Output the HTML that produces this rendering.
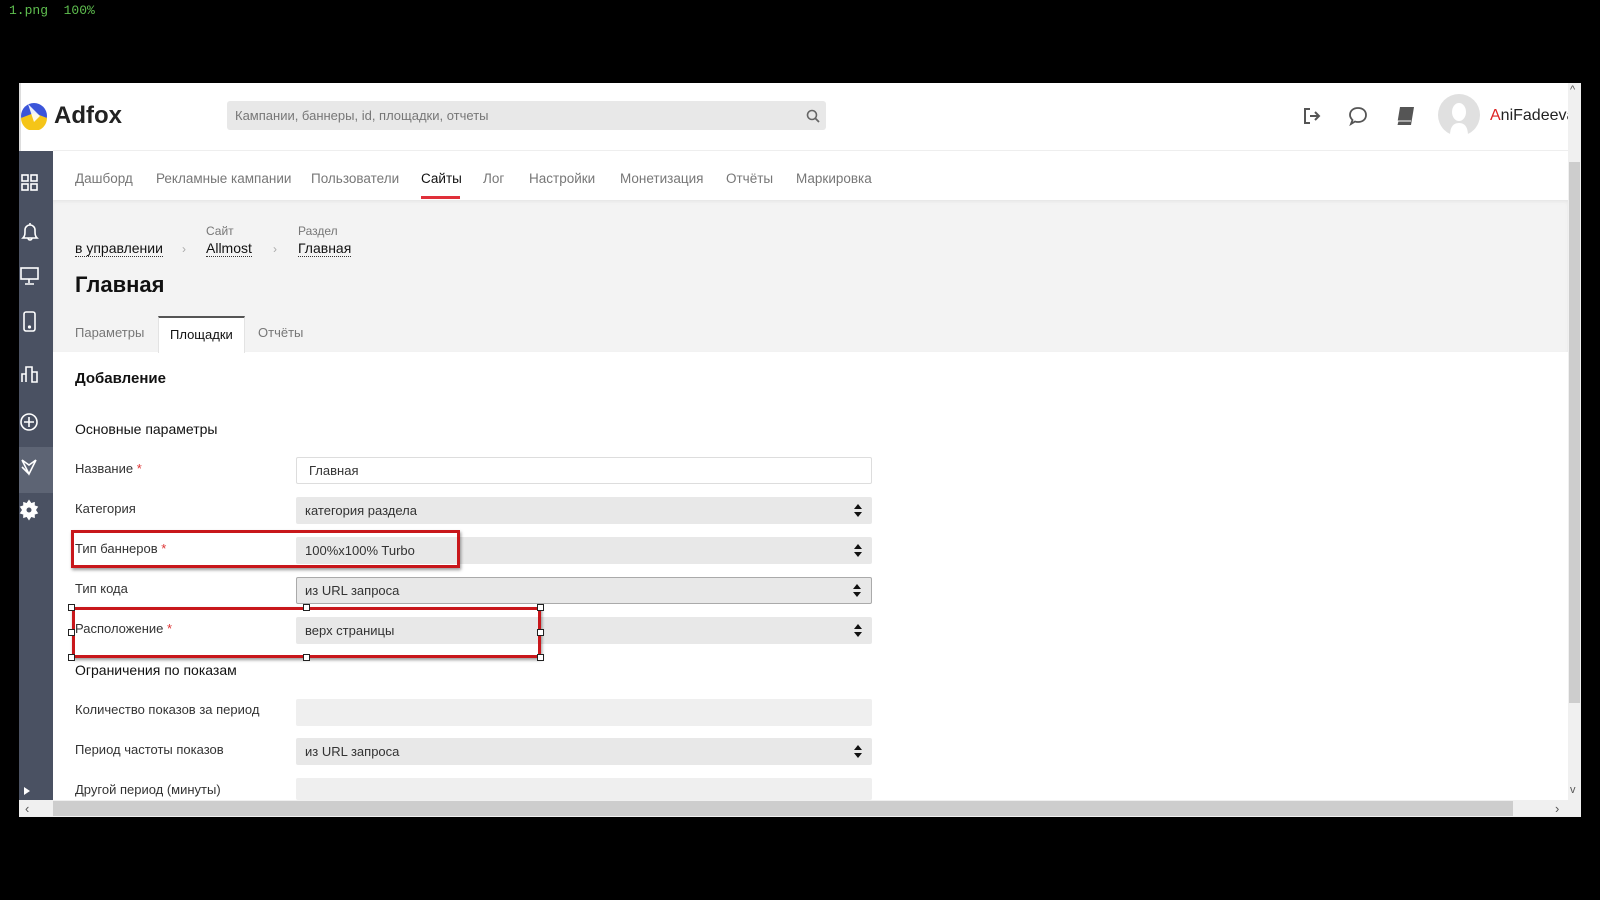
<!DOCTYPE html>
<html><head><meta charset="utf-8"><style>
*{margin:0;padding:0;box-sizing:border-box}
body{width:1600px;height:900px;background:#000;position:relative;overflow:hidden;font-family:"Liberation Sans",Arial,sans-serif;color:#222}
.a{position:absolute}
.app{left:19px;top:83px;width:1562px;height:734px;background:#fff;overflow:hidden}
.t{position:absolute;white-space:nowrap}
.nav{font-size:13.5px;color:#777;top:171px}
.lbl{font-size:13px;color:#333;left:75px}
.fld{left:296px;width:576px;height:27px;background:#e8e8e8;border-radius:2px;font-size:13px;color:#333;padding-left:9px;line-height:27px}
.arr{position:absolute;right:10px;top:7px;width:8px;height:13px}
.star{color:#d33}
.red{border:3px solid #c8171b;box-shadow:1px 2px 3px rgba(0,0,0,.4)}
.h{width:7px;height:7px;background:#fff;border:1px solid #222;position:absolute}
</style></head><body>
<div class="t" style="left:9px;top:3px;color:#5fbf4f;font-family:'Liberation Mono',monospace;font-size:13px">1.png&nbsp;&nbsp;100%</div>
<div class="a app"></div>
<div class="a" style="left:19px;top:83px;width:2px;height:734px;background:#ddd"></div>
<svg class="a" style="left:20px;top:102px" width="28" height="28" viewBox="0 0 28 28"><circle cx="14" cy="14" r="13" fill="#3b55d9"/><path d="M1 16 L14 11 L27 16 A13 13 0 0 1 1 16Z" fill="#f5c518"/><path d="M8 2 L20 14 L14 20 Z" fill="#fff" opacity=".9"/></svg>
<div class="t" style="left:54px;top:102px;font-size:24px;font-weight:bold;color:#222">Adfox</div>
<div class="a" style="left:227px;top:101px;width:599px;height:29px;background:#e8e8e8;border-radius:3px"></div>
<div class="t" style="left:235px;top:108px;font-size:13px;color:#777">Кампании, баннеры, id, площадки, отчеты</div>
<svg class="a" style="left:806px;top:109px" width="14" height="14"><circle cx="6" cy="6" r="4.5" fill="none" stroke="#666" stroke-width="1.6"/><path d="M9.5 9.5 L13 13" stroke="#666" stroke-width="1.8"/></svg>
<svg class="a" style="left:1302px;top:106px" width="20" height="20"><path d="M8 3H3v14h5" fill="none" stroke="#555" stroke-width="2"/><path d="M8 10h9M13 6l4 4-4 4" fill="none" stroke="#555" stroke-width="2"/></svg>
<svg class="a" style="left:1347px;top:105px" width="22" height="22"><path d="M11 3c5 0 8 3 8 7s-3 7-8 7c-1 0-2 0-3-.5L4 19l1.5-4C4 13.5 3 12 3 10c0-4 3-7 8-7z" fill="none" stroke="#555" stroke-width="1.8"/></svg>
<svg class="a" style="left:1394px;top:105px" width="22" height="22"><path d="M6 2h14l-3 18H3z" fill="#555"/><path d="M3 20l1-4h13" stroke="#fff" stroke-width="1" fill="none"/></svg>
<div class="a" style="left:1438px;top:94px;width:42px;height:42px;border-radius:50%;background:#e0e0e0"></div>
<svg class="a" style="left:1446px;top:99px" width="26" height="37"><ellipse cx="13" cy="13" rx="7" ry="9" fill="#fff"/><path d="M4 37c0-10 4-13 9-13s9 3 9 13z" fill="#fff"/></svg>
<div class="t" style="left:1490px;top:107px;font-size:16px;color:#222"><span style="color:#d22">A</span>niFadeeva</div>
<div class="a" style="left:53px;top:150px;width:1515px;height:1px;background:#eee"></div>
<div class="a" style="left:19px;top:151px;width:34px;height:649px;background:#4a5162"></div>
<div class="a" style="left:19px;top:447px;width:34px;height:46px;background:#5d6474"></div>
<svg class="a" style="left:19px;top:170px" width="34" height="360" fill="none" stroke="#fff" stroke-width="1.6">
<rect x="3" y="5" width="6" height="6"/><rect x="12" y="5" width="6" height="6"/><rect x="3" y="14" width="6" height="6"/><rect x="12" y="14" width="6" height="6"/>
<path d="M4 68c2-2 2-4 2-8a5 5 0 0 1 10 0c0 4 0 6 2 8zM9 68a2 2 0 0 0 4 0M11 55v-2"/>
<rect x="2" y="98" width="17" height="11"/><path d="M10 109v4M6 114h9"/>
<rect x="5" y="142" width="11" height="19" rx="2"/><circle cx="10.5" cy="157" r=".8" fill="#fff"/>
<path d="M3 212v-8h4v8M7 212v-15h6v15M13 212v-10h5v10z"/>
<circle cx="10" cy="252" r="8"/><path d="M10 247v10M5 252h10"/>
<path d="M3 290l7 5 7-5M3 290l7 14 7-14M3 297l7 7"/>
<path d="M10 331l2 3 3-1 0 3 3 1-2 3 2 3-3 1 0 3-3-1-2 3-2-3-3 1 0-3-3-1 2-3-2-3 3-1 0-3 3 1z" fill="#fff"/><circle cx="10" cy="340" r="2.5" fill="#4a5162" stroke="none"/>
</svg>
<div class="a" style="left:24px;top:787px;width:0;height:0;border-left:6px solid #fff;border-top:4px solid transparent;border-bottom:4px solid transparent"></div>
<div class="t nav" style="left:75px">Дашборд</div>
<div class="t nav" style="left:156px">Рекламные кампании</div>
<div class="t nav" style="left:311px">Пользователи</div>
<div class="t nav" style="left:421px;color:#111">Сайты</div>
<div class="t nav" style="left:483px">Лог</div>
<div class="t nav" style="left:529px">Настройки</div>
<div class="t nav" style="left:620px">Монетизация</div>
<div class="t nav" style="left:726px">Отчёты</div>
<div class="t nav" style="left:796px">Маркировка</div>
<div class="a" style="left:421px;top:196px;width:39px;height:3px;background:#e0303a"></div>
<div class="a" style="left:53px;top:200px;width:1515px;height:152px;background:#f3f3f3;box-shadow:inset 0 2px 3px rgba(0,0,0,.05)"></div>
<div class="t" style="left:206px;top:224px;font-size:12px;color:#777">Сайт</div>
<div class="t" style="left:298px;top:224px;font-size:12px;color:#777">Раздел</div>
<div class="t" style="left:75px;top:240px;font-size:14px;color:#111;border-bottom:1px dotted #333">в управлении</div>
<div class="t" style="left:182px;top:242px;font-size:12px;color:#aaa">›</div>
<div class="t" style="left:206px;top:240px;font-size:14px;color:#111;border-bottom:1px dotted #333">Allmost</div>
<div class="t" style="left:273px;top:242px;font-size:12px;color:#aaa">›</div>
<div class="t" style="left:298px;top:240px;font-size:14px;color:#111;border-bottom:1px dotted #333">Главная</div>
<div class="t" style="left:75px;top:272px;font-size:22px;font-weight:bold;color:#111">Главная</div>
<div class="t" style="left:75px;top:325px;font-size:13px;color:#777">Параметры</div>
<div class="a" style="left:158px;top:316px;width:87px;height:37px;background:#fff;border-top:2px solid #555;border-left:1px solid #e3e3e3;border-right:1px solid #e3e3e3"></div>
<div class="t" style="left:170px;top:327px;font-size:13px;color:#111">Площадки</div>
<div class="t" style="left:258px;top:325px;font-size:13px;color:#777">Отчёты</div>
<div class="t" style="left:75px;top:370px;font-size:15px;font-weight:bold;color:#111">Добавление</div>
<div class="t" style="left:75px;top:421px;font-size:14px;color:#111">Основные параметры</div>
<div class="t lbl" style="top:461px">Название <span class="star">*</span></div>
<div class="t lbl" style="top:501px">Категория</div>
<div class="t lbl" style="top:541px">Тип баннеров <span class="star">*</span></div>
<div class="t lbl" style="top:581px">Тип кода</div>
<div class="t lbl" style="top:621px">Расположение <span class="star">*</span></div>
<div class="t" style="left:75px;top:662px;font-size:14px;color:#111">Ограничения по показам</div>
<div class="t lbl" style="top:702px">Количество показов за период</div>
<div class="t lbl" style="top:742px">Период частоты показов</div>
<div class="t lbl" style="top:782px">Другой период (минуты)</div>
<div class="a fld" style="top:457px;background:#fff;border:1px solid #ddd;padding-left:12px;line-height:25px">Главная</div>
<svg width="0" height="0" style="position:absolute"><defs><g id="ar"><path d="M4 0L8 5H0z M0 8H8L4 13z" fill="#111"/></g></defs></svg>
<div class="a fld" style="top:497px">категория раздела<svg class="arr"><use href="#ar"/></svg></div>
<div class="a fld" style="top:537px">100%x100% Turbo<svg class="arr"><use href="#ar"/></svg></div>
<div class="a fld" style="top:577px;border:1px solid #aaa;line-height:25px;padding-left:8px">из URL запроса<svg class="arr" style="top:6px"><use href="#ar"/></svg></div>
<div class="a fld" style="top:617px">верх страницы<svg class="arr"><use href="#ar"/></svg></div>
<div class="a fld" style="top:699px;background:#efefef"></div>
<div class="a fld" style="top:738px">из URL запроса<svg class="arr"><use href="#ar"/></svg></div>
<div class="a fld" style="top:778px;background:#efefef;height:22px"></div>
<div class="a red" style="left:71px;top:530px;width:389px;height:38px"></div>
<div class="a red" style="left:72px;top:607px;width:469px;height:51px"></div>
<div class="h" style="left:68px;top:604px"></div><div class="h" style="left:303px;top:604px"></div><div class="h" style="left:537px;top:604px"></div>
<div class="h" style="left:68px;top:629px"></div><div class="h" style="left:537px;top:629px"></div>
<div class="h" style="left:68px;top:654px"></div><div class="h" style="left:303px;top:654px"></div><div class="h" style="left:537px;top:654px"></div>
<div class="a" style="left:1568px;top:83px;width:13px;height:717px;background:#f0f0f0"></div>
<div class="a" style="left:1569px;top:162px;width:11px;height:541px;background:#cdcdcd"></div>
<div class="t" style="left:1570px;top:84px;font-size:11px;color:#555">^</div>
<div class="t" style="left:1570px;top:784px;font-size:11px;color:#555">v</div>
<div class="a" style="left:19px;top:800px;width:1562px;height:17px;background:#f0f0f0"></div>
<div class="a" style="left:53px;top:801px;width:1460px;height:15px;background:#cdcdcd"></div>
<div class="t" style="left:25px;top:801px;font-size:13px;color:#555">‹</div>
<div class="t" style="left:1555px;top:801px;font-size:13px;color:#555">›</div>
</body></html>
